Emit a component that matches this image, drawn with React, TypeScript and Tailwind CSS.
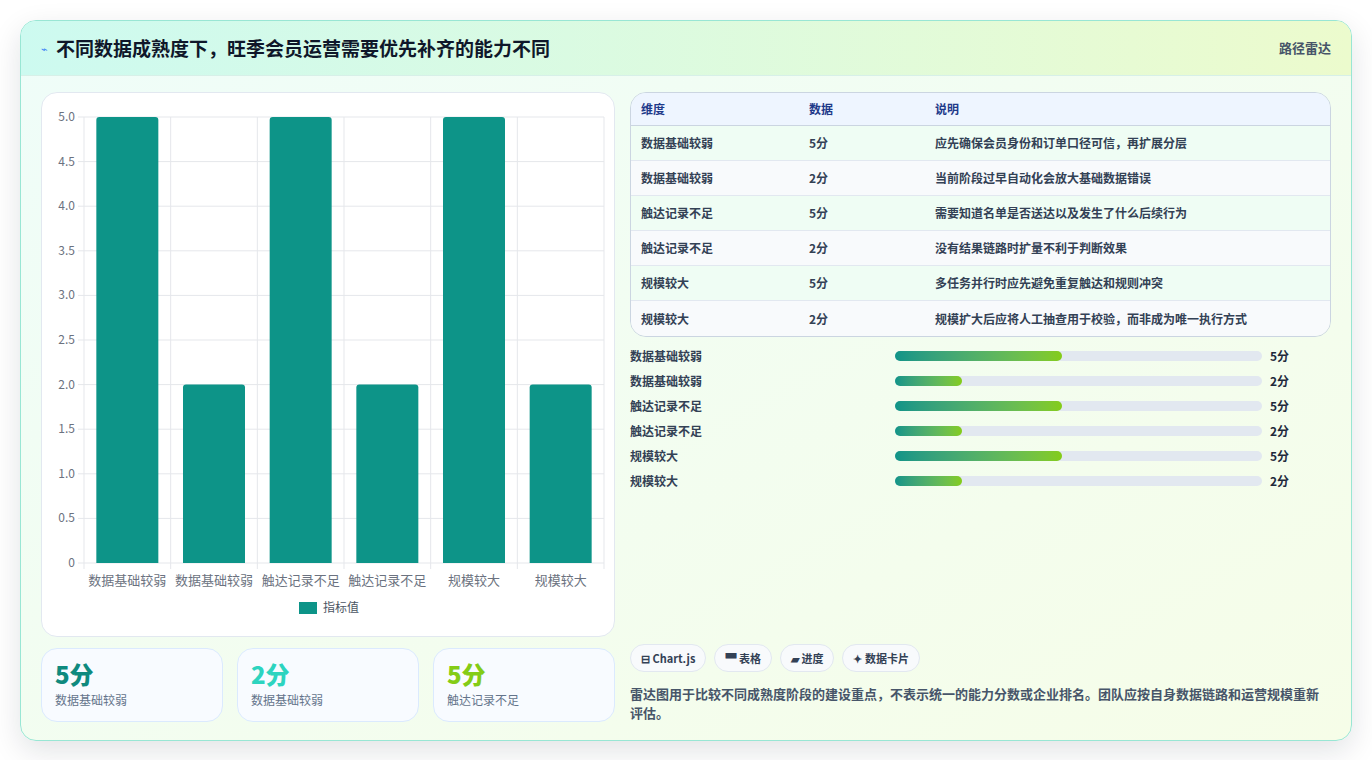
const F = { fontFamily: '"Noto Sans CJK SC", "Noto Sans", sans-serif' };

const bars = [
  { label: "数据基础较弱", value: 5 },
  { label: "数据基础较弱", value: 2 },
  { label: "触达记录不足", value: 5 },
  { label: "触达记录不足", value: 2 },
  { label: "规模较大", value: 5 },
  { label: "规模较大", value: 2 },
];

const rows = [
  ["数据基础较弱", "5分", "应先确保会员身份和订单口径可信，再扩展分层"],
  ["数据基础较弱", "2分", "当前阶段过早自动化会放大基础数据错误"],
  ["触达记录不足", "5分", "需要知道名单是否送达以及发生了什么后续行为"],
  ["触达记录不足", "2分", "没有结果链路时扩量不利于判断效果"],
  ["规模较大", "5分", "多任务并行时应先避免重复触达和规则冲突"],
  ["规模较大", "2分", "规模扩大后应将人工抽查用于校验，而非成为唯一执行方式"],
];

function BarChart() {
  const L = 42, R = 562, T = 24, B = 470;
  const unit = (B - T) / 5;
  const cw = (R - L) / 6;
  const ticks = [0, 0.5, 1, 1.5, 2, 2.5, 3, 3.5, 4, 4.5, 5];
  return (
    <svg width="574" height="542" viewBox="0 0 574 542" style={F}>
      {ticks.map((t) => {
        const y = B - t * unit;
        return (
          <g key={t}>
            <line x1={L - 6} x2={R} y1={y} y2={y} stroke="#e5e7eb" />
            <text x={L - 9} y={y + 4} textAnchor="end" fontSize="12" fill="#6b7280">
              {t === 0 ? "0" : t.toFixed(1)}
            </text>
          </g>
        );
      })}
      {Array.from({ length: 7 }).map((_, i) => (
        <line key={i} x1={L + i * cw} x2={L + i * cw} y1={T} y2={B + 6} stroke="#e5e7eb" />
      ))}
      {bars.map((b, i) => {
        const cx = L + cw * (i + 0.5);
        const h = b.value * unit;
        return (
          <g key={i}>
            <path
              d={`M${cx - 31} ${B} V${B - h + 3} Q${cx - 31} ${B - h} ${cx - 28} ${B - h} H${cx + 28} Q${cx + 31} ${B - h} ${cx + 31} ${B - h + 3} V${B} Z`}
              fill="#0d9488"
            />
            <text x={cx} y={B + 22} textAnchor="middle" fontSize="13" fill="#6b7280">
              {b.label}
            </text>
          </g>
        );
      })}
      <rect x="257" y="509" width="18" height="12" fill="#0d9488" />
      <text x="281" y="519" fontSize="12" fill="#4b5563">指标值</text>
    </svg>
  );
}

export default function App() {
  return (
    <div className="min-h-screen bg-white p-5" style={F}>
      <div className="overflow-hidden rounded-2xl border border-[#99e6d4] bg-gradient-to-br from-[#effdf9] to-[#f6fde8] shadow-[0_10px_30px_rgba(15,23,42,0.12)]">
        <div className="flex h-[55px] items-center justify-between border-b border-[#d7f0e8] bg-gradient-to-r from-[#cdfaf0] to-[#ecfbcd] px-5">
          <div className="flex items-center gap-2">
            <span className="text-[11px] text-[#3b82f6]">⌁</span>
            <h1 className="text-[19px] font-bold text-[#0f172a]">不同数据成熟度下，旺季会员运营需要优先补齐的能力不同</h1>
          </div>
          <span className="text-[13px] font-semibold text-[#475569]">路径雷达</span>
        </div>

        <div className="flex gap-[15px] px-5 pt-[16px] pb-[18px]">
          <div className="flex w-[574px] shrink-0 flex-col gap-[11px]">
            <div className="h-[545px] rounded-2xl border border-[#e2e8f0] bg-white">
              <BarChart />
            </div>
            <div className="grid grid-cols-3 gap-[14px]">
              {[
                ["5分", "text-[#0f8a7e]", "数据基础较弱"],
                ["2分", "text-[#2dd4bf]", "数据基础较弱"],
                ["5分", "text-[#84cc16]", "触达记录不足"],
              ].map(([v, c, l], i) => (
                <div key={i} className="h-[74px] rounded-2xl border border-[#dbeafe] bg-[#f8fbff] px-[13px] pt-[10px]">
                  <div className={`text-[24px] font-extrabold leading-[30px] ${c}`}>{v}</div>
                  <div className="mt-[2px] text-[12px] text-[#64748b]">{l}</div>
                </div>
              ))}
            </div>
          </div>

          <div className="flex min-w-0 flex-1 flex-col">
            <div className="overflow-hidden rounded-2xl border border-[#cbd5e1]">
              <div className="flex h-[33px] items-center border-b border-[#cbd5e1] bg-[#eef5ff] px-[10px] text-[12px] font-semibold text-[#1e3a8a]">
                <div className="w-[168px]">维度</div>
                <div className="w-[126px]">数据</div>
                <div>说明</div>
              </div>
              {rows.map((r, i) => (
                <div
                  key={i}
                  className={`flex h-[35px] items-center px-[10px] text-[12px] font-semibold text-[#334155] ${i < 5 ? "border-b border-[#e2e8f0]" : ""} ${i % 2 === 0 ? "bg-[#effdf4]" : "bg-[#f8fafc]"}`}
                >
                  <div className="w-[168px]">{r[0]}</div>
                  <div className="w-[126px]">{r[1]}</div>
                  <div>{r[2]}</div>
                </div>
              ))}
            </div>

            <div className="mt-[10px] flex flex-col gap-[7px]">
              {bars.map((b, i) => (
                <div key={i} className="flex h-[18px] items-center text-[12px] font-semibold text-[#334155]">
                  <div className="w-[265px]">{b.label}</div>
                  <div className="h-[10px] w-[367px] rounded-full bg-[#e2e8f0]">
                    <div
                      className="h-full rounded-full bg-gradient-to-r from-[#0f9488] to-[#84cc16]"
                      style={{ width: `${(b.value / 11) * 100}%` }}
                    />
                  </div>
                  <div className="ml-2 font-bold text-[#1e293b]">{b.value}分</div>
                </div>
              ))}
            </div>

            <div className="mt-auto flex gap-2">
              {["⊟ Chart.js", "▀ 表格", "▰ 进度", "✦ 数据卡片"].map((t) => (
                <span key={t} className="rounded-full border border-[#e2e8f0] bg-[#f8fafc] px-[10px] py-[5px] text-[11px] font-semibold text-[#334155]">
                  {t}
                </span>
              ))}
            </div>
            <p className="mt-[12px] text-[13px] leading-[19px] font-semibold text-[#475569]">
              雷达图用于比较不同成熟度阶段的建设重点，不表示统一的能力分数或企业排名。团队应按自身数据链路和运营规模重新评估。
            </p>
          </div>
        </div>
      </div>
    </div>
  );
}
